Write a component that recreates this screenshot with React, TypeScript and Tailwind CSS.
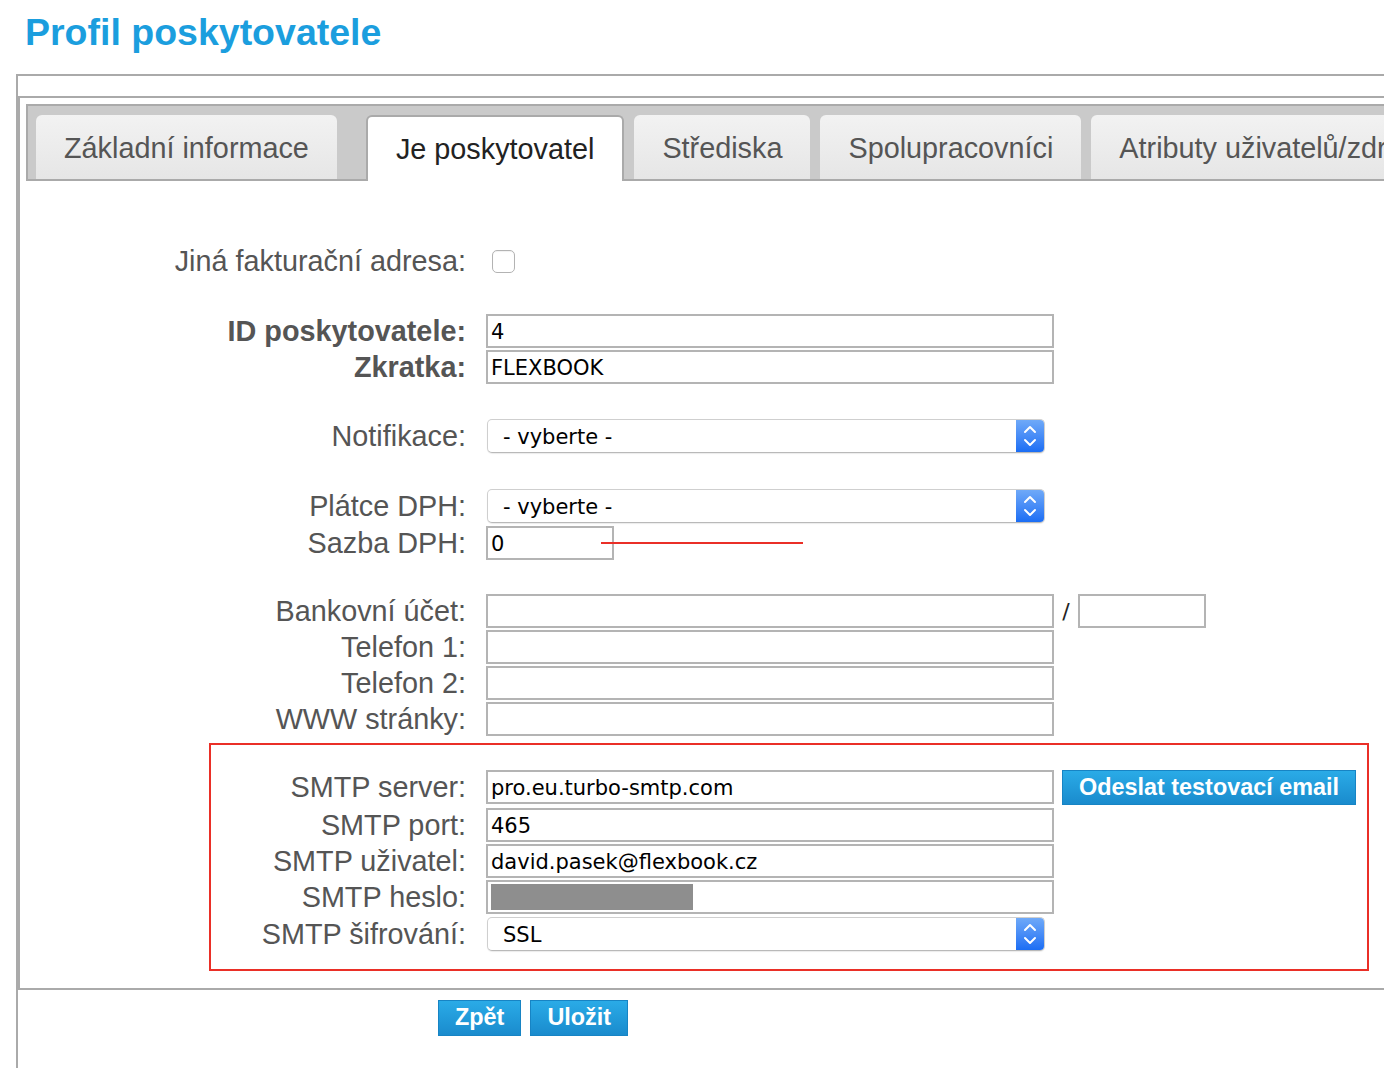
import React from "react"

const sans = { fontFamily: '"Liberation Sans", Arial, Helvetica, sans-serif' }
const sys = { fontFamily: '"DejaVu Sans", Verdana, sans-serif' }

function Label({ children, bold = false, width = "w-[446px]" }: { children: React.ReactNode; bold?: boolean; width?: string }) {
  return (
    <div className={`${width} shrink-0 text-right text-[28.8px] leading-none text-[#555] ${bold ? "font-bold" : ""}`} style={sans}>
      {children}
    </div>
  )
}

function TextInput({ value = "", w = "w-[568px]", children }: { value?: string; w?: string; children?: React.ReactNode }) {
  return (
    <div
      className={`${w} h-[34px] shrink-0 border-2 border-[#b4b4b4] bg-white px-[3px] pt-[2px] text-[21px] leading-[28px] text-black whitespace-nowrap overflow-hidden`}
      style={sys}
    >
      {children ?? value}
    </div>
  )
}

function Select({ value }: { value: string }) {
  return (
    <div className="ml-[1px] w-[558px] h-[34px] shrink-0 flex rounded-[5px] border border-[#cfcfcf] border-b-[#b9b9b9] bg-white shadow-[0_1px_1px_rgba(0,0,0,0.08)] overflow-hidden">
      <div className="flex-1 flex items-center pl-[15px] pt-[3px] text-[21px] text-black" style={sys}>
        {value}
      </div>
      <div className="w-[28px] h-full bg-gradient-to-b from-[#6fa9f8] to-[#1a6df4] flex items-center justify-center">
        <svg width="28" height="32" viewBox="0 0 28 32" fill="none" stroke="white" strokeWidth="2" strokeLinecap="round" strokeLinejoin="round">
          <polyline points="9,12 14,7 19,12" />
          <polyline points="9,20 14,25 19,20" />
        </svg>
      </div>
    </div>
  )
}

function Row({ label, bold, mt, children, labelWidth }: { label: string; bold?: boolean; mt: string; children: React.ReactNode; labelWidth?: string }) {
  return (
    <div className={`${mt} h-[34px] flex items-center relative`}>
      <Label bold={bold} width={labelWidth}>{label}</Label>
      <div className="ml-[20px] flex items-center">{children}</div>
    </div>
  )
}

function BlueButton({ children }: { children: React.ReactNode }) {
  return (
    <button
      className="h-full px-[16px] border border-[#1784c4] bg-gradient-to-b from-[#2aabe7] to-[#1a8bcd] text-white font-bold text-[23.4px] leading-none whitespace-nowrap"
      style={sans}
    >
      {children}
    </button>
  )
}

const tabs = ["Základní informace", "Je poskytovatel", "Střediska", "Spolupracovníci", "Atributy uživatelů/zdrojů"]

export default function App() {
  return (
    <div className="w-full h-[1068px] overflow-hidden bg-white" style={sans}>
      <h1 className="h-[51px] pl-[25px] pt-[14px] text-[37.5px] leading-[37px] font-bold text-[#1b9ede]">Profil poskytovatele</h1>

      {/* outer frame */}
      <div className="mt-[23px] ml-[16px] border-l-2 border-t-2 border-[#aaa] pb-[32px]">
        <div className="h-[20px]" />

        {/* inner panel */}
        <div className="border-l-2 border-t-2 border-b-2 border-[#aaa] pb-[17px]">
          {/* tab bar */}
          <div className="ml-[6px] mt-[6px] h-[77px] border-y-2 border-l-2 border-[#aaa] bg-[#cacaca] flex items-end pl-[8px] gap-[10px] whitespace-nowrap">
            {tabs.map((t, i) =>
              i === 1 ? (
                <div
                  key={t}
                  className="shrink-0 h-[66px] -mb-[2px] px-[28px] border-2 border-b-0 border-[#aaa] rounded-t-[6px] bg-white flex items-center pt-[1px] text-[28.8px] text-[#222] relative z-10"
                >
                  {t}
                </div>
              ) : (
                <div
                  key={t}
                  className={`shrink-0 h-[64px] px-[28px] rounded-t-[6px] bg-gradient-to-b from-[#f2f2f2] to-[#e6e6e6] flex items-center pt-[4px] text-[28.8px] text-[#555] ${i === 0 ? "mr-[19px]" : ""}`}
                >
                  {t}
                </div>
              )
            )}
          </div>

          {/* form */}
          <div className="mt-[63px] h-[34px] flex items-center">
            <Label>Jiná fakturační adresa:</Label>
            <div className="ml-[26px] w-[23px] h-[23px] rounded-[5px] border border-[#b3b3b3] bg-white shadow-[inset_0_1px_1px_rgba(0,0,0,0.06)]" />
          </div>

          <Row label="ID poskytovatele:" bold mt="mt-[36px]">
            <TextInput value="4" />
          </Row>
          <Row label="Zkratka:" bold mt="mt-[2px]">
            <TextInput value="FLEXBOOK" />
          </Row>

          <Row label="Notifikace:" mt="mt-[35px]">
            <Select value="- vyberte -" />
          </Row>

          <Row label="Plátce DPH:" mt="mt-[36px]">
            <Select value="- vyberte -" />
          </Row>
          <Row label="Sazba DPH:" mt="mt-[3px]">
            <TextInput value="0" w="w-[128px]" />
            <div className="absolute left-[581px] top-[16px] w-[202px] h-[2px] bg-[#ea2f27]" />
          </Row>

          <Row label="Bankovní účet:" mt="mt-[34px]">
            <TextInput />
            <div className="w-[24px] text-center text-[22px] text-[#222]" style={sys}>/</div>
            <TextInput w="w-[128px]" />
          </Row>
          <Row label="Telefon 1:" mt="mt-[2px]">
            <TextInput />
          </Row>
          <Row label="Telefon 2:" mt="mt-[2px]">
            <TextInput />
          </Row>
          <Row label="WWW stránky:" mt="mt-[2px]">
            <TextInput />
          </Row>

          {/* SMTP block */}
          <div className="mt-[7px] ml-[189px] w-[1160px] border-2 border-[#ea2f27] pt-[25px] pb-[18px]">
            <div className="h-[34px] mb-[4px] flex items-center">
              <Label width="w-[255px]">SMTP server:</Label>
              <div className="ml-[20px] flex items-center h-[34px]">
                <TextInput value="pro.eu.turbo-smtp.com" />
                <div className="ml-[8px] h-[35px] self-start">
                  <BlueButton>Odeslat testovací email</BlueButton>
                </div>
              </div>
            </div>
            <Row label="SMTP port:" mt="mt-0" labelWidth="w-[255px]">
              <TextInput value="465" />
            </Row>
            <Row label="SMTP uživatel:" mt="mt-[2px]" labelWidth="w-[255px]">
              <TextInput value="david.pasek@flexbook.cz" />
            </Row>
            <Row label="SMTP heslo:" mt="mt-[2px]" labelWidth="w-[255px]">
              <TextInput>
                <div className="w-[202px] h-[26px] bg-[#8e8e8e]" />
              </TextInput>
            </Row>
            <Row label="SMTP šifrování:" mt="mt-[3px]" labelWidth="w-[255px]">
              <Select value="SSL" />
            </Row>
          </div>
        </div>

        {/* bottom buttons */}
        <div className="mt-[10px] ml-[420px] h-[36px] flex gap-[9px]">
          <BlueButton>Zpět</BlueButton>
          <BlueButton>Uložit</BlueButton>
        </div>
      </div>
    </div>
  )
}
